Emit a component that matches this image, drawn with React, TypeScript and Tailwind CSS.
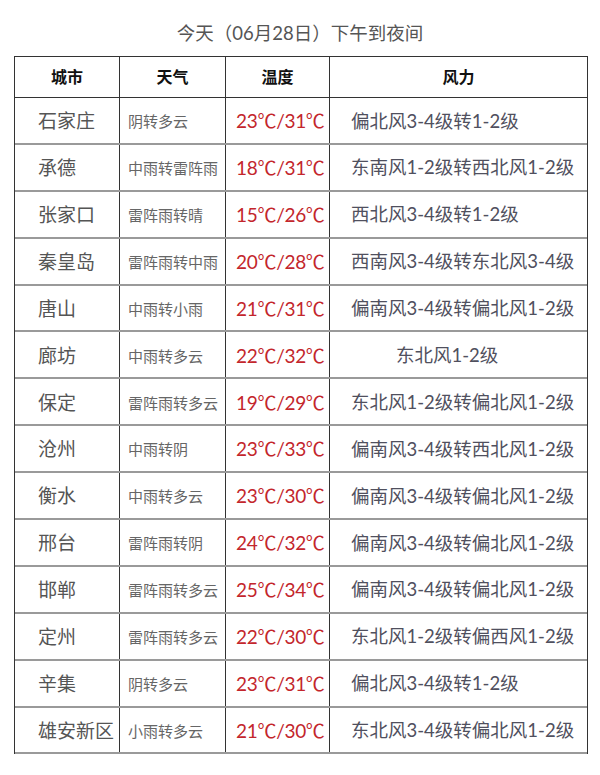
const rows: { city: string; weather: string; temp: string; wind: string; indent?: boolean }[] = [
  { city: "石家庄", weather: "阴转多云", temp: "23℃/31℃", wind: "偏北风3-4级转1-2级" },
  { city: "承德", weather: "中雨转雷阵雨", temp: "18℃/31℃", wind: "东南风1-2级转西北风1-2级" },
  { city: "张家口", weather: "雷阵雨转晴", temp: "15℃/26℃", wind: "西北风3-4级转1-2级" },
  { city: "秦皇岛", weather: "雷阵雨转中雨", temp: "20℃/28℃", wind: "西南风3-4级转东北风3-4级" },
  { city: "唐山", weather: "中雨转小雨", temp: "21℃/31℃", wind: "偏南风3-4级转偏北风1-2级" },
  { city: "廊坊", weather: "中雨转多云", temp: "22℃/32℃", wind: "东北风1-2级", indent: true },
  { city: "保定", weather: "雷阵雨转多云", temp: "19℃/29℃", wind: "东北风1-2级转偏北风1-2级" },
  { city: "沧州", weather: "中雨转阴", temp: "23℃/33℃", wind: "偏南风3-4级转西北风1-2级" },
  { city: "衡水", weather: "中雨转多云", temp: "23℃/30℃", wind: "偏南风3-4级转偏北风1-2级" },
  { city: "邢台", weather: "雷阵雨转阴", temp: "24℃/32℃", wind: "偏南风3-4级转偏北风1-2级" },
  { city: "邯郸", weather: "雷阵雨转多云", temp: "25℃/34℃", wind: "偏南风3-4级转偏北风1-2级" },
  { city: "定州", weather: "雷阵雨转多云", temp: "22℃/30℃", wind: "东北风1-2级转偏西风1-2级" },
  { city: "辛集", weather: "阴转多云", temp: "23℃/31℃", wind: "偏北风3-4级转1-2级" },
  { city: "雄安新区", weather: "小雨转多云", temp: "21℃/30℃", wind: "东北风3-4级转偏北风1-2级" },
]

const font = "font-['Lato','Noto_Sans_CJK_SC',sans-serif]"

export default function App() {
  return (
    <div className={`w-[600px] h-[775px] bg-white ${font}`}>
      <div className="h-[56px] pt-[20px] text-center text-[18.5px] leading-[26px] text-[#555]">
        今天（06月28日）下午到夜间
      </div>
      <div className="ml-[14px] w-[574px] border-l border-r border-[#333]">
        <div className="grid grid-cols-[105px_106px_104px_257px] h-[42px] border-t border-b border-[#333] text-[16px] font-bold text-[#111]">
          <div className="flex items-center justify-center border-r border-[#333]">城市</div>
          <div className="flex items-center justify-center border-r border-[#333]">天气</div>
          <div className="flex items-center justify-center border-r border-[#333]">温度</div>
          <div className="flex items-center justify-center">风力</div>
        </div>
        {rows.map((r) => (
          <div key={r.city} className="grid grid-cols-[105px_106px_104px_257px] h-[46.9px] border-b-2 border-[#9a9a9a]">
            <div className="flex items-center pl-[23px] pt-[2px] border-r border-[#333] text-[19px] text-[#555] whitespace-nowrap">
              {r.city}
            </div>
            <div className="flex items-center pl-[8px] pt-[2px] border-r border-[#333] text-[15px] text-[#666] whitespace-nowrap">
              {r.weather}
            </div>
            <div className="flex items-center pl-[10px] pt-[2px] border-r border-[#333] text-[19px] text-[#c3262c] whitespace-nowrap tracking-[-0.3px]">
              {r.temp}
            </div>
            <div
              className={`flex items-center pt-[2px] text-[18.5px] text-[#50505e] whitespace-nowrap ${
                r.indent ? "pl-[66px]" : "pl-[21px]"
              }`}
            >
              {r.wind}
            </div>
          </div>
        ))}
      </div>
    </div>
  )
}
